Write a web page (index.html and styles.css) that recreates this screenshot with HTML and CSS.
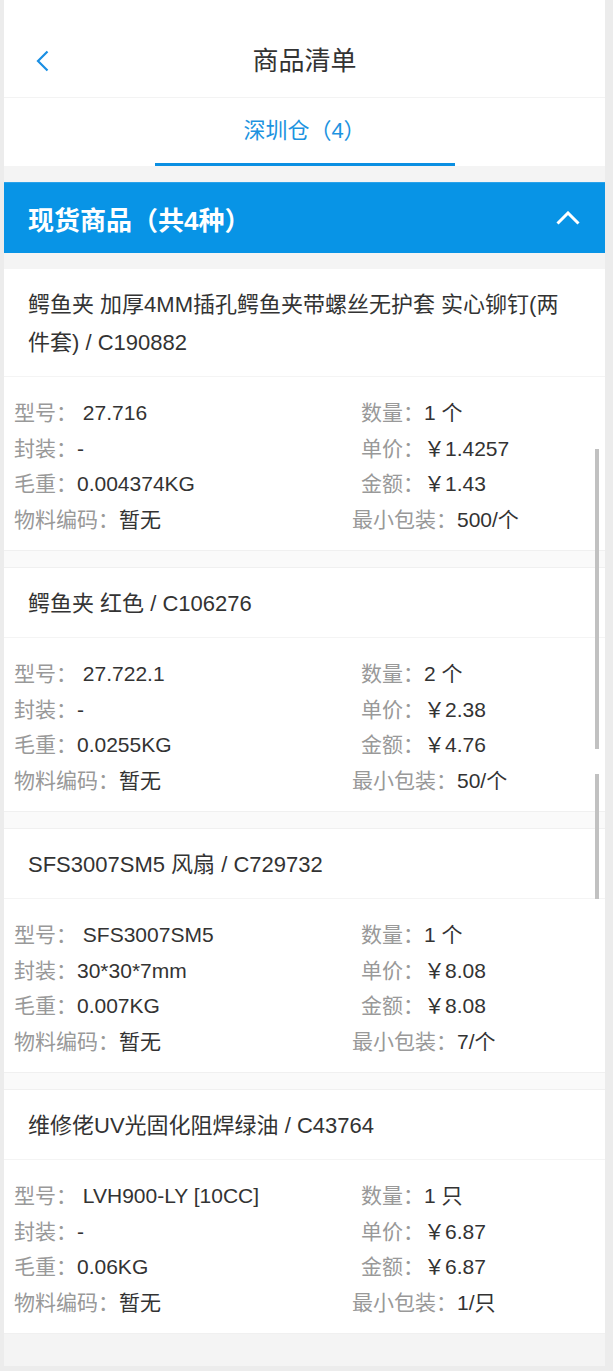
FILE: index.html
```html
<!DOCTYPE html>
<html lang="zh-CN">
<head>
    <meta charset="UTF-8">
    <meta name="viewport" content="width=device-width, initial-scale=1.0">
    <title>商品清单</title>
    <link rel="stylesheet" href="styles.css">
</head>
<body>
    <div class="page">
        <header class="top-bar">
            <a class="back" href="#">
                <svg width="13" height="22" viewBox="0 0 13 22"><path d="M11.5 1.5 L2 11 L11.5 20.5" fill="none" stroke="#1a8fe3" stroke-width="2.2"/></svg>
            </a>
            <h1>商品清单</h1>
        </header>

        <nav class="tabs">
            <span class="tab active">深圳仓（4）</span>
        </nav>

        <section class="group">
            <div class="group-head">
                <h2>现货商品（共4种）</h2>
                <svg width="24" height="14" viewBox="0 0 24 14"><path d="M1.5 12.5 L12 2 L22.5 12.5" fill="none" stroke="#fff" stroke-width="3"/></svg>
            </div>

            <div class="goods-list">
                <div class="goods">
                    <div class="goods-name">鳄鱼夹 加厚4MM插孔鳄鱼夹带螺丝无护套 实心铆钉(两件套) / C190882</div>
                    <div class="goods-info">
                        <div class="field"><span class="label">型号：</span><span class="value"> 27.716</span></div>
                        <div class="field"><span class="label">数量：</span><span class="value">1 个</span></div>
                        <div class="field"><span class="label">封装：</span><span class="value">-</span></div>
                        <div class="field"><span class="label">单价：</span><span class="value">￥1.4257</span></div>
                        <div class="field"><span class="label">毛重：</span><span class="value">0.004374KG</span></div>
                        <div class="field"><span class="label">金额：</span><span class="value">￥1.43</span></div>
                        <div class="field"><span class="label">物料编码：</span><span class="value">暂无</span></div>
                        <div class="field wide"><span class="label">最小包装：</span><span class="value">500/个</span></div>
                    </div>
                </div>

                <div class="goods">
                    <div class="goods-name">鳄鱼夹 红色 / C106276</div>
                    <div class="goods-info">
                        <div class="field"><span class="label">型号：</span><span class="value"> 27.722.1</span></div>
                        <div class="field"><span class="label">数量：</span><span class="value">2 个</span></div>
                        <div class="field"><span class="label">封装：</span><span class="value">-</span></div>
                        <div class="field"><span class="label">单价：</span><span class="value">￥2.38</span></div>
                        <div class="field"><span class="label">毛重：</span><span class="value">0.0255KG</span></div>
                        <div class="field"><span class="label">金额：</span><span class="value">￥4.76</span></div>
                        <div class="field"><span class="label">物料编码：</span><span class="value">暂无</span></div>
                        <div class="field wide"><span class="label">最小包装：</span><span class="value">50/个</span></div>
                    </div>
                </div>

                <div class="goods">
                    <div class="goods-name">SFS3007SM5 风扇 / C729732</div>
                    <div class="goods-info">
                        <div class="field"><span class="label">型号：</span><span class="value"> SFS3007SM5</span></div>
                        <div class="field"><span class="label">数量：</span><span class="value">1 个</span></div>
                        <div class="field"><span class="label">封装：</span><span class="value">30*30*7mm</span></div>
                        <div class="field"><span class="label">单价：</span><span class="value">￥8.08</span></div>
                        <div class="field"><span class="label">毛重：</span><span class="value">0.007KG</span></div>
                        <div class="field"><span class="label">金额：</span><span class="value">￥8.08</span></div>
                        <div class="field"><span class="label">物料编码：</span><span class="value">暂无</span></div>
                        <div class="field wide"><span class="label">最小包装：</span><span class="value">7/个</span></div>
                    </div>
                </div>

                <div class="goods">
                    <div class="goods-name">维修佬UV光固化阻焊绿油 / C43764</div>
                    <div class="goods-info">
                        <div class="field"><span class="label">型号：</span><span class="value"> LVH900-LY [10CC]</span></div>
                        <div class="field"><span class="label">数量：</span><span class="value">1 只</span></div>
                        <div class="field"><span class="label">封装：</span><span class="value">-</span></div>
                        <div class="field"><span class="label">单价：</span><span class="value">￥6.87</span></div>
                        <div class="field"><span class="label">毛重：</span><span class="value">0.06KG</span></div>
                        <div class="field"><span class="label">金额：</span><span class="value">￥6.87</span></div>
                        <div class="field"><span class="label">物料编码：</span><span class="value">暂无</span></div>
                        <div class="field wide"><span class="label">最小包装：</span><span class="value">1/只</span></div>
                    </div>
                </div>
            </div>
        </section>

        <!-- scrollbar thumbs of the inner list -->
        <div class="thumb thumb-a"></div>
        <div class="thumb thumb-b"></div>
    </div>
</body>
</html>
```

FILE: styles.css
```css
body {
    font-family: "Liberation Sans", "Noto Sans CJK SC", sans-serif;
    margin: 0;
    padding: 0 8px 0 4px;
    background-color: #ececec;
}

.page {
    position: relative;
    background-color: #f4f4f4;
    padding-bottom: 32px;
}

.top-bar {
    display: grid;
    grid-template-columns: 1fr auto 1fr;
    align-items: center;
    height: 73px;
    padding-top: 22px;
    padding-bottom: 2px;
    background-color: #fff;
    border-bottom: 1px solid #f3f3f3;
}

.back {
    display: flex;
    padding-left: 32px;
    margin-top: 4px;
}

.top-bar h1 {
    margin: 0;
    font-size: 26px;
    font-weight: normal;
    color: #333;
}

.tabs {
    display: flex;
    justify-content: center;
    height: 68px;
    background-color: #fff;
}

.tab {
    width: 300px;
    text-align: center;
    font-size: 22px;
    line-height: 65px;
    color: #1d93e0;
    border-bottom: 3px solid #0a8fe2;
}

.group {
    margin-top: 16px;
}

.group-head {
    display: flex;
    align-items: center;
    justify-content: space-between;
    height: 70px;
    padding: 0 25px 0 24px;
    background-color: #0894e6;
    border-top: 1px solid #2aa2ea;
}

.group-head h2 {
    margin: 0;
    font-size: 26px;
    color: #fff;
}

.goods-list {
    margin-top: 16px;
    background-color: #fafafa;
}

.goods {
    background-color: #fff;
    border-bottom: 1px solid #f0f0f0;
    margin-bottom: 16px;
}

.goods + .goods {
    border-top: 1px solid #f0f0f0;
}

.goods:last-child {
    margin-bottom: 0;
}

.goods-name {
    padding: 17px 32px 14px 24px;
    font-size: 22px;
    line-height: 38px;
    color: #333;
    border-bottom: 1px solid #f4f4f4;
}

.goods-info {
    display: grid;
    grid-template-columns: 347px 1fr;
    padding: 18px 10px 13px;
    font-size: 21px;
    line-height: 35.5px;
}

.label {
    color: #999;
}

.value {
    color: #333;
}

.wide {
    margin-left: -9px;
}

.thumb {
    position: absolute;
    left: 591px;
    width: 4px;
    background-color: #c1c1c1;
}

.thumb-a {
    top: 449px;
    height: 300px;
}

.thumb-b {
    top: 774px;
    height: 125px;
}
```
